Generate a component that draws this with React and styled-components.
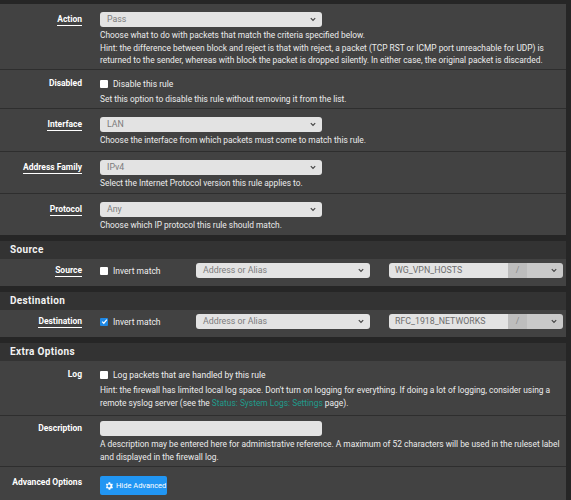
import React from 'react';
import styled, { createGlobalStyle } from 'styled-components';

const Global = createGlobalStyle`
	html, body {
		margin: 0;
		padding: 0;
		background: #262626;
	}
	body {
		font-family: Roboto, "Liberation Sans", sans-serif;
		-webkit-font-smoothing: antialiased;
	}
`;

const Page = styled.div`
	width: 571px;
	height: 500px;
	overflow: hidden;
	padding: 4px 5px 0 0;
	box-sizing: border-box;
	background: #262626;
`;

const Panel = styled.section`
	background: #424242;
	margin-bottom: 6px;
`;

const Heading = styled.h2`
	margin: 0;
	height: 18px;
	line-height: 18px;
	padding-left: 10px;
	background: #333333;
	color: #f2f2f2;
	font-size: 10px;
	font-weight: 700;
	letter-spacing: 0.35px;
`;

const Row = styled.div`
	display: grid;
	grid-template-columns: 90px 1fr;
	column-gap: 10px;
	padding: ${p => p.$pad || '8px 0 4px 0'};
	border-top: ${p => (p.$first ? 'none' : '1px solid #2e2e2e')};
	box-sizing: border-box;
	height: ${p => p.$h}px;
`;

const Label = styled.div`
	text-align: right;
	padding-right: 8px;
	color: #ffffff;
	font-size: 8.5px;
	font-weight: 700;
	line-height: 15px;
	& span {
		border-bottom: ${p => (p.$link ? '1px solid #ffffff' : 'none')};
		padding-bottom: 1px;
	}
`;

const Content = styled.div`
	display: flex;
	flex-direction: column;
	min-width: 0;
`;

const Select = styled.div`
	position: relative;
	width: ${p => p.$w || 222}px;
	height: 15px;
	line-height: 15px;
	background: #e3e3e3;
	border-radius: 3px;
	color: #7c7c7c;
	font-size: 8.8px;
	padding-left: 7px;
	box-sizing: border-box;
	flex-shrink: 0;
`;

const Chevron = styled.svg`
	position: absolute;
	right: 6px;
	top: 5px;
`;

const Help = styled.p`
	margin: 2px 0 0 0;
	color: #ececec;
	font-size: 8.4px;
	line-height: 12.5px;
	white-space: nowrap;
	& a {
		color: #1f9c8c;
		text-decoration: none;
	}
`;

const CheckLine = styled.label`
	display: flex;
	align-items: center;
	gap: 5px;
	height: 15px;
	color: #f0f0f0;
	font-size: 8.5px;
	width: ${p => (p.$w ? p.$w + 'px' : 'auto')};
	flex-shrink: 0;
`;

const Box = styled.span`
	width: 8px;
	height: 8px;
	border-radius: 1px;
	background: ${p => (p.$checked ? '#1e88e5' : '#ffffff')};
	display: flex;
	align-items: center;
	justify-content: center;
`;

const Inline = styled.div`
	display: flex;
	align-items: center;
	height: 15px;
`;

const Combo = styled.div`
	display: flex;
	margin-left: 19px;
	width: 174px;
	height: 15px;
	border-radius: 3px;
	overflow: hidden;
	font-size: 8.8px;
	line-height: 15px;
`;

const ComboInput = styled.div`
	width: 119px;
	background: #e3e3e3;
	color: #6e6e6e;
	padding-left: 6px;
	box-sizing: border-box;
`;

const ComboSlash = styled.div`
	width: 19px;
	background: #bdbdbd;
	color: #8a8a8a;
	text-align: center;
`;

const ComboSelect = styled.div`
	position: relative;
	flex: 1;
	background: #c9c9c9;
`;

const TextInput = styled.div`
	width: 222px;
	height: 15px;
	background: #e3e3e3;
	border-radius: 3px;
`;

const Button = styled.button`
	display: flex;
	align-items: center;
	gap: 2px;
	width: 67px;
	height: 19px;
	margin-top: 1px;
	padding: 0 0 0 4px;
	border: none;
	border-radius: 2px;
	background: #2196f3;
	color: #ffffff;
	font-family: Roboto, "Liberation Sans", sans-serif;
	font-size: 7.5px;
	cursor: pointer;
`;

const ChevronIcon = () => (
	<Chevron width="6" height="5" viewBox="0 0 6 5">
		<path d="M0.8 1.2 L3 3.4 L5.2 1.2" fill="none" stroke="#444" strokeWidth="1.2" />
	</Chevron>
);

const Check = ({ checked }) => (
	<Box $checked={checked}>
		{checked && (
			<svg width="7" height="7" viewBox="0 0 8 8">
				<path d="M1.3 4.2 L3.2 6 L6.7 1.8" fill="none" stroke="#fff" strokeWidth="1.4" />
			</svg>
		)}
	</Box>
);

const Gear = () => (
	<svg width="10" height="10" viewBox="0 0 24 24">
		<path
			fill="#fff"
			d="M19.4 13a7.5 7.5 0 0 0 0-2l2.1-1.6-2-3.5-2.5 1a7.6 7.6 0 0 0-1.7-1L15 3.2h-4l-.4 2.7a7.6 7.6 0 0 0-1.7 1l-2.5-1-2 3.5L6.6 11a7.5 7.5 0 0 0 0 2l-2.1 1.6 2 3.5 2.5-1a7.6 7.6 0 0 0 1.7 1l.4 2.7h4l.4-2.7a7.6 7.6 0 0 0 1.7-1l2.5 1 2-3.5zM12 15.5a3.5 3.5 0 1 1 0-7 3.5 3.5 0 0 1 0 7z"
		/>
	</svg>
);

const SelectField = ({ value, w }) => (
	<Select $w={w}>
		{value}
		<ChevronIcon />
	</Select>
);

const AddressRow = ({ label, checked, alias }) => (
	<Row $first $h={27} $pad="4px 0 0 0">
		<Label $link>
			<span>{label}</span>
		</Label>
		<Inline>
			<CheckLine $w={96}>
				<Check checked={checked} />
				Invert match
			</CheckLine>
			<SelectField value="Address or Alias" w={174} />
			<Combo>
				<ComboInput>{alias}</ComboInput>
				<ComboSlash>/</ComboSlash>
				<ComboSelect>
					<ChevronIcon />
				</ComboSelect>
			</Combo>
		</Inline>
	</Row>
);

export default function App() {
	return (
		<Page>
			<Global />
			<Panel>
				<Row $first $h={65}>
					<Label $link>
						<span>Action</span>
					</Label>
					<Content>
						<SelectField value="Pass" />
						<Help>
							Choose what to do with packets that match the criteria specified below.
							<br />
							Hint: the difference between block and reject is that with reject, a packet (TCP RST or ICMP port unreachable for UDP) is
							<br />
							returned to the sender, whereas with block the packet is dropped silently. In either case, the original packet is discarded.
						</Help>
					</Content>
				</Row>
				<Row $h={39} $pad="6px 0 4px 0">
					<Label>
						<span>Disabled</span>
					</Label>
					<Content>
						<CheckLine>
							<Check />
							Disable this rule
						</CheckLine>
						<Help>Set this option to disable this rule without removing it from the list.</Help>
					</Content>
				</Row>
				<Row $h={43}>
					<Label $link>
						<span>Interface</span>
					</Label>
					<Content>
						<SelectField value="LAN" />
						<Help>Choose the interface from which packets must come to match this rule.</Help>
					</Content>
				</Row>
				<Row $h={42}>
					<Label $link>
						<span>Address Family</span>
					</Label>
					<Content>
						<SelectField value="IPv4" />
						<Help>Select the Internet Protocol version this rule applies to.</Help>
					</Content>
				</Row>
				<Row $h={42}>
					<Label $link>
						<span>Protocol</span>
					</Label>
					<Content>
						<SelectField value="Any" />
						<Help>Choose which IP protocol this rule should match.</Help>
					</Content>
				</Row>
			</Panel>

			<Panel>
				<Heading>Source</Heading>
				<AddressRow label="Source" alias="WG_VPN_HOSTS" />
			</Panel>

			<Panel>
				<Heading>Destination</Heading>
				<AddressRow label="Destination" alias="RFC_1918_NETWORKS" checked />
			</Panel>

			<Panel>
				<Heading>Extra Options</Heading>
				<Row $first $h={54} $pad="6px 0 4px 0">
					<Label>
						<span>Log</span>
					</Label>
					<Content>
						<CheckLine>
							<Check />
							Log packets that are handled by this rule
						</CheckLine>
						<Help>
							Hint: the firewall has limited local log space. Don't turn on logging for everything. If doing a lot of logging, consider using a
							<br />
							remote syslog server (see the <a href="#">Status: System Logs: Settings</a> page).
						</Help>
					</Content>
				</Row>
				<Row $h={51} $pad="5px 0 4px 0">
					<Label>
						<span>Description</span>
					</Label>
					<Content>
						<TextInput />
						<Help>
							A description may be entered here for administrative reference. A maximum of 52 characters will be used in the ruleset label
							<br />
							and displayed in the firewall log.
						</Help>
					</Content>
				</Row>
				<Row $h={34} $pad="8px 0 4px 0">
					<Label>
						<span>Advanced Options</span>
					</Label>
					<Content>
						<Button>
							<Gear />
							Hide Advanced
						</Button>
					</Content>
				</Row>
			</Panel>
		</Page>
	);
}
